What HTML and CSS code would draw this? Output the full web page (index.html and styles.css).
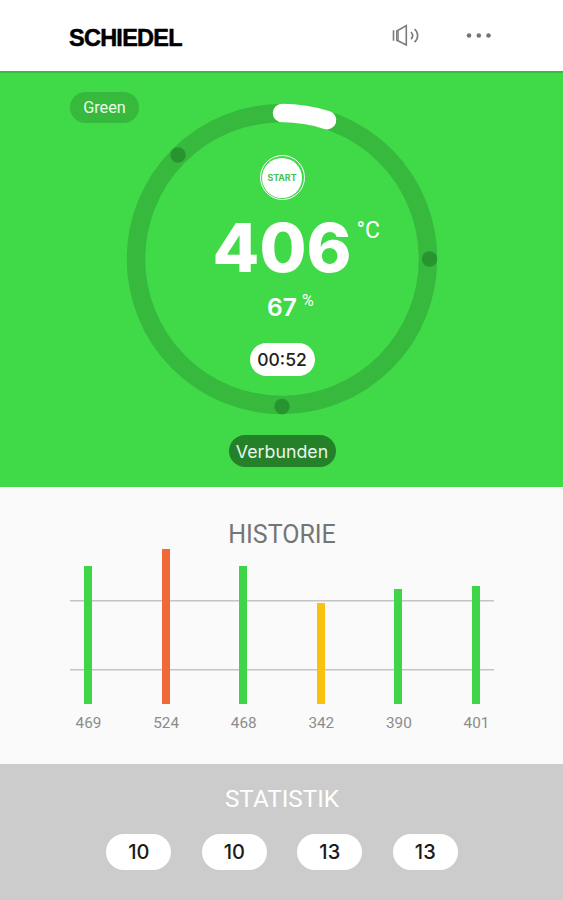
FILE: index.html
```html
<!DOCTYPE html>
<html lang="de">
<head>
    <meta charset="utf-8">
    <title>Schiedel</title>
    <link rel="stylesheet" href="styles.css">
</head>
<body>
    <header class="header">
        <div class="logo">SCHIEDEL</div>
        <div class="actions">
            <svg class="sound" width="28" height="24" viewBox="0 0 28 24" fill="none" stroke="#7b7b7b" stroke-width="1.6">
                <path d="M1.5 6.3v10.4"/>
                <path d="M4.8 7v9.2L14.3 21V1.6L4.8 7z"/>
                <path d="M6.2 7v9.4" stroke-width="1.2"/>
                <path d="M19 8c2 2.2 2 5 0 7.2M22.5 5c4.2 3.6 4.2 9.6 0 13.2"/>
            </svg>
            <svg class="more" width="26" height="6" viewBox="0 0 26 6" fill="#757575">
                <circle cx="3" cy="2.5" r="2.3"/>
                <circle cx="12.8" cy="2.5" r="2.3"/>
                <circle cx="22.5" cy="2.5" r="2.3"/>
            </svg>
        </div>
    </header>

    <section class="status">
        <div class="color-pill">Green</div>
        <div class="dial">
            <svg class="ring" width="312" height="312" viewBox="-156 -156 312 312" fill="none">
                <circle r="146" stroke="#36b93d" stroke-width="18.5"/>
                <circle class="mark" cx="-104" cy="-104" r="7.7"/>
                <circle class="mark" cx="147.5" cy="0" r="7.7"/>
                <circle class="mark" cx="0" cy="147.5" r="7.7"/>
                <path d="M0 -146A146 146 0 0 1 45.1 -138.9" stroke="#fff" stroke-width="18.5" stroke-linecap="round"/>
            </svg>
            <div class="readings">
                <div class="start"><span>START</span></div>
                <div class="temperature">406<sup>°C</sup></div>
                <div class="humidity">67<sup>%</sup></div>
                <div class="timer">00:52</div>
            </div>
        </div>
        <div class="connection">Verbunden</div>
    </section>

    <section class="history">
        <h2>HISTORIE</h2>
        <div class="chart">
            <div class="column"><div class="bar" style="height: 138px"></div><span>469</span></div>
            <div class="column"><div class="bar hot" style="height: 155px"></div><span>524</span></div>
            <div class="column"><div class="bar" style="height: 138px"></div><span>468</span></div>
            <div class="column"><div class="bar low" style="height: 101px"></div><span>342</span></div>
            <div class="column"><div class="bar" style="height: 115px"></div><span>390</span></div>
            <div class="column"><div class="bar" style="height: 118px"></div><span>401</span></div>
        </div>
    </section>

    <section class="statistics">
        <h2>STATISTIK</h2>
        <div class="values">
            <div class="value">10</div>
            <div class="value">10</div>
            <div class="value">13</div>
            <div class="value">13</div>
        </div>
    </section>
</body>
</html>
```
FILE: styles.css
```css
* {
    box-sizing: border-box;
}

body {
    margin: 0;
    height: 900px;
    display: flex;
    flex-direction: column;
    font-family: Roboto, sans-serif;
    background: #fafafa;
}

h2 {
    margin: 0;
    font-size: 25px;
    line-height: 30px;
    font-weight: 400;
    text-align: center;
}

.header {
    height: 71px;
    display: flex;
    justify-content: space-between;
    padding: 0 71px 0 69px;
    background: #fff;
}

.logo {
    margin-top: 24px;
    font: bold 23.5px/28px "Liberation Sans", Arial, sans-serif;
    letter-spacing: -0.75px;
    -webkit-text-stroke: 0.5px #000;
    color: #000;
}

.actions {
    display: flex;
    align-items: center;
    gap: 46px;
}

.status {
    height: 416px;
    display: grid;
    grid-template-rows: 32px 312px 1fr;
    justify-items: center;
    background: #40da49;
    border-top: 2px solid #35bd3d;
}

.color-pill {
    justify-self: start;
    width: 69px;
    height: 31px;
    margin: 19px 0 0 70px;
    border-radius: 16px;
    background: #36b93d;
    color: #e9fbe9;
    font-size: 16.3px;
    line-height: 31px;
    text-align: center;
}

.dial {
    display: grid;
    width: 312px;
    height: 312px;
    margin-top: -2px;
}

.ring,
.readings {
    grid-area: 1 / 1;
}

.mark {
    fill: #279430;
}

.readings {
    display: flex;
    flex-direction: column;
    align-items: center;
    padding: 52px 0 0 1px;
    color: #fff;
}

.readings sup {
    position: absolute;
    font-family: Roboto, sans-serif;
    font-weight: 400;
    letter-spacing: 0;
}

.start {
    width: 45px;
    height: 45px;
    padding: 1.5px;
    border: 1.5px solid #fff;
    border-radius: 50%;
}

.start span {
    display: block;
    height: 100%;
    border-radius: 50%;
    background: #fff;
    color: #43c34b;
    font: bold 8.8px/39px Inter, sans-serif;
    text-align: center;
}

.temperature {
    position: relative;
    margin-top: 15px;
    font: 800 68px/64px Inter, sans-serif;
}

.temperature sup {
    left: 100%;
    top: 3px;
    margin-left: 5px;
    font-size: 23px;
    line-height: 26px;
}

.humidity {
    position: relative;
    margin-top: 13px;
    font: 600 24.5px/30px Inter, sans-serif;
}

.humidity sup {
    left: 100%;
    top: 0;
    margin-left: 5px;
    font-size: 16px;
    line-height: 17px;
}

.timer {
    width: 65px;
    height: 33px;
    margin-top: 21px;
    border-radius: 17px;
    background: #fff;
    color: #222;
    font: 500 17.5px/33px Inter, sans-serif;
    text-align: center;
}

.connection {
    width: 107px;
    height: 32px;
    margin: 18px 0 0 1px;
    border-radius: 16px;
    background: #248029;
    color: #e9f5e9;
    font: 400 17.8px/33px Inter, sans-serif;
    text-align: center;
}

.history {
    height: 277px;
    padding: 32px 69px 0 70px;
    color: #757575;
}

.history h2 {
    line-height: 31px;
    margin-bottom: -1px;
}

.chart {
    height: 186px;
    display: flex;
    justify-content: space-between;
    background: linear-gradient(#c4c4c4, #c4c4c4) 0 51px / 100% 1.5px no-repeat,
                linear-gradient(#c4c4c4, #c4c4c4) 0 120px / 100% 1.5px no-repeat;
}

.column {
    width: 36px;
    display: flex;
    flex-direction: column;
    justify-content: flex-end;
    align-items: center;
}

.bar {
    width: 8px;
    background: #40d549;
}

.bar.hot {
    background: #f26938;
}

.bar.low {
    background: #f9c110;
}

.column span {
    height: 31px;
    padding: 9px 0 0 1px;
    font-size: 15.3px;
    line-height: 20px;
    color: #8c8c8c;
}

.statistics {
    flex: 1;
    padding: 20px 0 0 1px;
    background: #ccc;
    color: #fff;
}

.statistics h2 {
    font-size: 24.3px;
}

.values {
    display: flex;
    justify-content: center;
    gap: 30.5px;
    margin-top: 20px;
}

.value {
    width: 65px;
    height: 36px;
    border-radius: 18px;
    background: #fff;
    color: #1a1a1a;
    font: 500 20px/36px Inter, sans-serif;
    text-align: center;
}
```
